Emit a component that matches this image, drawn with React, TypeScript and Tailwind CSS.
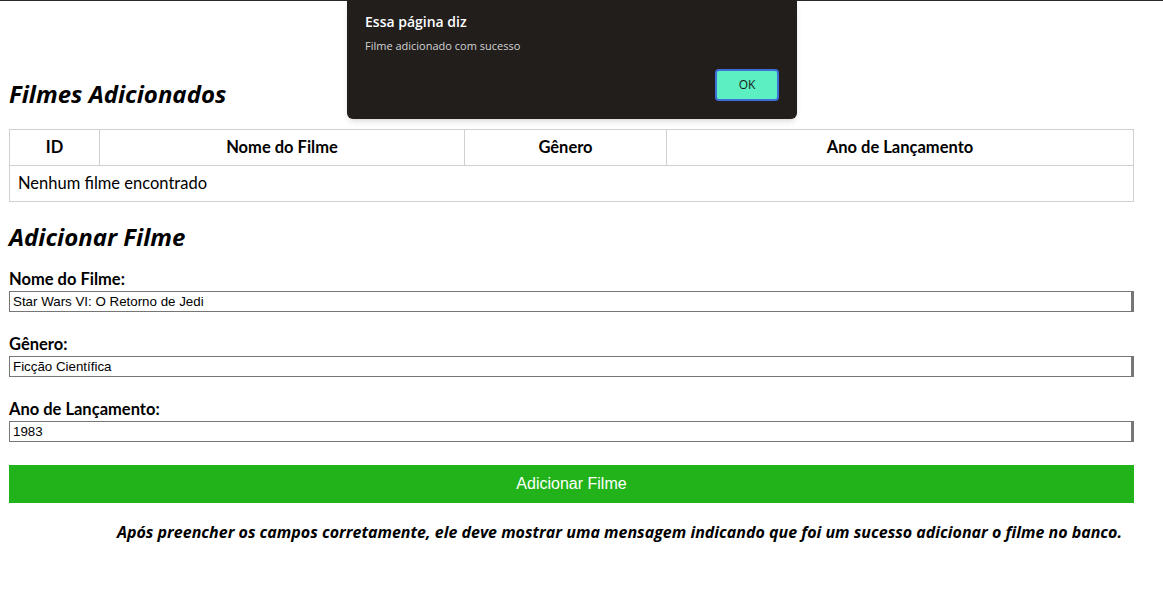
import React from 'react';

const fields = [
  { label: 'Nome do Filme:', value: 'Star Wars VI: O Retorno de Jedi' },
  { label: 'Gênero:', value: 'Ficção Científica' },
  { label: 'Ano de Lançamento:', value: '1983' },
];

const App: React.FC = () => {
  return (
    <div className="relative min-h-[609px] bg-white text-black font-['Trebuchet_MS',Lato,sans-serif]">
      <div className="h-px bg-[#2b2b2b]"></div>

      {/* Page content */}
      <main className="pl-[9px] pr-[29px] pt-[79px]">
        <h2 className="text-[24px] leading-[28px] font-bold italic font-['Trebuchet_MS','Open_Sans',sans-serif]">
          Filmes Adicionados
        </h2>

        <table className="mt-[21px] w-full border-collapse text-[16.5px]">
          <thead>
            <tr className="h-[36px]">
              <th className="w-[90px] border border-[#d0d0d0] font-bold">ID</th>
              <th className="w-[365px] border border-[#d0d0d0] font-bold">Nome do Filme</th>
              <th className="w-[202px] border border-[#d0d0d0] font-bold">Gênero</th>
              <th className="border border-[#d0d0d0] font-bold">Ano de Lançamento</th>
            </tr>
          </thead>
          <tbody>
            <tr className="h-[36px]">
              <td colSpan={4} className="border border-[#d0d0d0] px-[8px]">
                Nenhum filme encontrado
              </td>
            </tr>
          </tbody>
        </table>

        <h2 className="mt-[21px] text-[24px] leading-[28px] font-bold italic font-['Trebuchet_MS','Open_Sans',sans-serif]">
          Adicionar Filme
        </h2>

        <form className="mt-[19px] flex flex-col" onSubmit={e => e.preventDefault()}>
          {fields.map((f, i) => (
            <div key={f.label} className={i > 0 ? 'mt-[23px]' : ''}>
              <label className="block text-[16.5px] leading-[19px] font-bold">{f.label}</label>
              <input
                readOnly
                value={f.value}
                className="mt-[2px] block w-full h-[21px] border border-r-[3px] border-[#767676] px-[3px] text-[13.33px] font-['Liberation_Sans',Arial,sans-serif] outline-none"
              />
            </div>
          ))}

          <button
            type="submit"
            className="mt-[23px] h-[38px] w-full bg-[#22b31a] text-white text-[16px] font-['Liberation_Sans',Arial,sans-serif]"
          >
            Adicionar Filme
          </button>
        </form>

        <p className="mt-[20px] pr-[12px] text-right text-[16px] leading-[19px] font-bold italic font-['Trebuchet_MS','Open_Sans',sans-serif]">
          Após preencher os campos corretamente, ele deve mostrar uma mensagem indicando que foi um sucesso adicionar o filme no banco.
        </p>
      </main>

      {/* Browser alert */}
      <div className="absolute top-0 left-[347px] w-[450px] h-[119px] rounded-b-[6px] bg-[#211e1c] px-[18px] pt-[12px] font-['Open_Sans','Noto_Sans',sans-serif] shadow-md">
        <div className="text-[14px] leading-[19px] font-semibold text-white">Essa página diz</div>
        <div className="mt-[7px] text-[11px] leading-[15px] text-[#d4d4d4]">Filme adicionado com sucesso</div>
        <div className="mt-[16px] flex justify-end">
          <button className="w-[64px] h-[32px] rounded-[4px] border-2 border-[#3f6ed8] bg-[#5cefc2] text-[12px] text-[#1a1a1a]">
            OK
          </button>
        </div>
      </div>
    </div>
  );
};

export default App;
